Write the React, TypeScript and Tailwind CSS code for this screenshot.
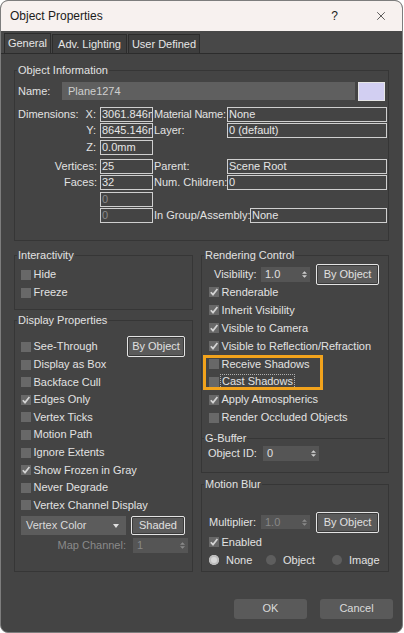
import { X } from "lucide-react";
import clsx from "clsx";

// Dark 3ds Max style "Object Properties" dialog

function Check({ checked }: { checked?: boolean }) {
  return (
    <span className="flex h-[10px] w-[10px] shrink-0 items-center justify-center bg-[#686868]">
      {checked && (
        <svg viewBox="0 0 10 10" className="h-[10px] w-[10px]">
          <path d="M1.8 5.2 L4 7.6 L8.4 2" stroke="#d4d4d4" strokeWidth="1.7" fill="none" />
        </svg>
      )}
    </span>
  );
}

function CheckRow({
  label,
  checked,
  className,
}: {
  label: string;
  checked?: boolean;
  className?: string;
}) {
  return (
    <div className={clsx("flex items-center whitespace-nowrap", className)}>
      <Check checked={checked} />
      <span className="ml-[2.5px]">{label}</span>
    </div>
  );
}

function Field({ value, dim, className }: { value: string; dim?: boolean; className?: string }) {
  return (
    <div
      className={clsx(
        "h-[15px] shrink-0 overflow-hidden whitespace-nowrap border border-[#cfcfcf] pl-[1px] leading-[13px]",
        dim ? "text-[#8a8a8a]" : "text-[#e6e6e6]",
        className
      )}
    >
      {value}
    </div>
  );
}

function Spinner({ value, disabled, className }: { value: string; disabled?: boolean; className?: string }) {
  return (
    <div
      className={clsx(
        "flex shrink-0 items-center justify-between bg-[#555555] pl-[4px] pr-[3px]",
        disabled ? "text-[#888888]" : "text-[#e0e0e0]",
        className
      )}
    >
      <span>{value}</span>
      <svg viewBox="0 0 6 10" className="h-[9px] w-[5px]">
        <path d="M0 4 L3 1 L6 4Z M0 6 L3 9 L6 6Z" fill={disabled ? "#8a8a8a" : "#cfcfcf"} />
      </svg>
    </div>
  );
}

function Button({ label, className }: { label: string; className?: string }) {
  return (
    <div
      className={clsx(
        "flex shrink-0 items-center justify-center rounded-[2px] border border-[#e4e4e4] bg-[#5a5a5a] text-[#e0e0e0] shadow-[inset_0_0_0_1px_#3a3a3a]",
        className
      )}
    >
      {label}
    </div>
  );
}

function Radio({ label, selected, className }: { label: string; selected?: boolean; className?: string }) {
  return (
    <div className={clsx("flex items-center", className)}>
      <span
        className={clsx(
          "h-[10px] w-[10px] shrink-0 rounded-full",
          selected ? "bg-[#d8d8d8] shadow-[inset_0_0_0_2px_#bdbdbd]" : "bg-[#5e5e5e]"
        )}
      />
      <span className="ml-[7px]">{label}</span>
    </div>
  );
}

function Tab({ label, active, className }: { label: string; active?: boolean; className?: string }) {
  return (
    <div
      className={clsx(
        "flex items-center justify-center border border-b-0 border-[#2c2c2c] text-[#e6e6e6]",
        active ? "h-[20px] bg-[#444444]" : "h-[19px] bg-[#3e3e3e]",
        className
      )}
    >
      {label}
    </div>
  );
}

export default function App() {
  return (
    <div className="h-[633px] w-[404px] bg-white font-['Liberation_Sans',Arial,sans-serif] text-[11px] leading-[13px] text-[#e2e2e2]">
      <div className="flex h-[633px] w-[403px] flex-col overflow-hidden rounded-[8px] border border-[#7d7d7d] bg-[#444444]">
        {/* Title bar */}
        <div className="flex h-[30px] shrink-0 items-center bg-[#f7f1ef] pl-[9px] text-[12px] text-[#1b1b1b]">
          <span className="flex-1">Object Properties</span>
          <span className="mr-[36px]">?</span>
          <X className="mr-[14px] h-[14px] w-[14px]" strokeWidth={1.2} />
        </div>

        {/* Tabs */}
        <div className="flex h-[23px] shrink-0 items-end gap-[1px] border-b border-[#2c2c2c] bg-[#484848] pl-[3px]">
          <Tab label="General" active className="w-[47px]" />
          <Tab label="Adv. Lighting" className="w-[75px]" />
          <Tab label="User Defined" className="w-[72px]" />
        </div>

        <div className="px-[13px]">
          {/* Object Information */}
          <fieldset className="mt-[9.5px] w-[375px] border border-[#363636] pb-[17px]">
            <legend className="ml-[2px] px-[1px]">Object Information</legend>

            <div className="mt-[5.5px] flex h-[18px] items-center pl-[3px]">
              <span className="w-[44px]">Name:</span>
              <div className="flex h-[18px] w-[293px] items-center bg-[#5f5f5f] pl-[6px] text-[#cfcfcf]">Plane1274</div>
              <div className="ml-[3px] h-[19px] w-[27px] border border-[#e6e6e6] bg-[#d2cff2]" />
            </div>

            <div className="mt-[7px] flex h-[15px] items-center whitespace-nowrap pl-[3px]">
              <div className="flex w-[82px] justify-between pr-[4px]">
                <span>Dimensions:</span>
                <span>X:</span>
              </div>
              <Field value="3061.846m" className="w-[53px]" />
              <span className="w-[74px] overflow-hidden pl-[1px] tracking-[-0.2px]">Material Name:</span>
              <Field value="None" className="w-[160px]" />
            </div>

            <div className="mt-[1px] flex h-[15px] items-center whitespace-nowrap pl-[3px]">
              <span className="w-[82px] pr-[4px] text-right">Y:</span>
              <Field value="8645.146m" className="w-[53px]" />
              <span className="w-[74px] pl-[1px]">Layer:</span>
              <Field value="0 (default)" className="w-[160px]" />
            </div>

            <div className="mt-[2px] flex h-[15px] items-center whitespace-nowrap pl-[3px]">
              <span className="w-[82px] pr-[4px] text-right">Z:</span>
              <Field value="0.0mm" className="w-[53px]" />
            </div>

            <div className="mt-[4px] flex h-[15px] items-center whitespace-nowrap pl-[3px]">
              <span className="w-[82px] pr-[3px] text-right">Vertices:</span>
              <Field value="25" className="w-[53px]" />
              <span className="w-[74px] pl-[1px]">Parent:</span>
              <Field value="Scene Root" className="w-[160px]" />
            </div>

            <div className="mt-[1px] flex h-[15px] items-center whitespace-nowrap pl-[3px]">
              <span className="w-[82px] pr-[3px] text-right">Faces:</span>
              <Field value="32" className="w-[53px]" />
              <span className="w-[74px] pl-[1px]">Num. Children:</span>
              <Field value="0" className="w-[160px]" />
            </div>

            <div className="mt-[2px] flex h-[15px] items-center whitespace-nowrap pl-[85px]">
              <Field value="0" dim className="w-[53px]" />
            </div>

            <div className="mt-[1px] flex h-[15px] items-center whitespace-nowrap pl-[85px]">
              <Field value="0" dim className="w-[53px]" />
              <span className="w-[97px] pl-[1px]">In Group/Assembly:</span>
              <Field value="None" className="w-[137px]" />
            </div>
          </fieldset>

          <div className="mt-[7.5px] flex gap-[8px]">
            {/* Left column */}
            <div className="w-[179px]">
              <fieldset className="w-[179px] border border-[#363636] pb-[7px]">
                <legend className="ml-[2px] px-[1px]">Interactivity</legend>
                <div className="mt-[4px] pl-[6px]">
                  <CheckRow label="Hide" className="h-[18px]" />
                  <CheckRow label="Freeze" className="h-[18px]" />
                </div>
              </fieldset>

              <fieldset className="mt-[4px] w-[179px] border border-[#363636] pb-[17.5px]">
                <legend className="ml-[2px] px-[1px]">Display Properties</legend>
                <div className="mt-[11.7px]">
                  <div className="flex h-[17.6px] items-center pl-[6px] pr-[7px]">
                    <CheckRow label="See-Through" />
                    <Button label="By Object" className="ml-auto h-[21px] w-[58px]" />
                  </div>
                  <CheckRow label="Display as Box" className="h-[17.6px] pl-[6px]" />
                  <CheckRow label="Backface Cull" className="h-[17.6px] pl-[6px]" />
                  <CheckRow label="Edges Only" checked className="h-[17.6px] pl-[6px]" />
                  <CheckRow label="Vertex Ticks" className="h-[17.6px] pl-[6px]" />
                  <CheckRow label="Motion Path" className="h-[17.6px] pl-[6px]" />
                  <CheckRow label="Ignore Extents" className="h-[17.6px] pl-[6px]" />
                  <CheckRow label="Show Frozen in Gray" checked className="h-[17.6px] pl-[6px]" />
                  <CheckRow label="Never Degrade" className="h-[17.6px] pl-[6px]" />
                  <CheckRow label="Vertex Channel Display" className="h-[17.6px] pl-[6px]" />
                </div>

                <div className="mt-[2px] flex h-[19px] items-center pl-[6px]">
                  <div className="flex h-[19px] w-[105px] items-center justify-between bg-[#5c5c5c] pl-[5px] pr-[7px] text-[#dadada]">
                    <span>Vertex Color</span>
                    <svg viewBox="0 0 6 4" className="h-[4px] w-[6px]">
                      <path d="M0 0 L6 0 L3 4Z" fill="#e0e0e0" />
                    </svg>
                  </div>
                  <Button label="Shaded" className="ml-[5px] h-[19px] w-[54px]" />
                </div>

                <div className="mt-[3px] flex h-[15px] items-center">
                  <span className="w-[111px] text-right text-[#8a8a8a]">Map Channel:</span>
                  <Spinner value="1" disabled className="ml-[7px] h-[15px] w-[55px]" />
                </div>
              </fieldset>
            </div>

            {/* Right column */}
            <div className="w-[188px]">
              <fieldset className="w-[188px] border border-[#363636] pb-[11px]">
                <legend className="ml-[2px] px-[1px]">Rendering Control</legend>

                <div className="mt-[4px] flex h-[18px] items-center pl-[12px]">
                  <span className="w-[47px]">Visibility:</span>
                  <Spinner value="1.0" className="h-[15px] w-[49px]" />
                  <Button label="By Object" className="ml-[6px] h-[21px] w-[63px]" />
                </div>

                <CheckRow label="Renderable" checked className="h-[17.9px] pl-[7px]" />
                <CheckRow label="Inherit Visibility" checked className="h-[17.9px] pl-[7px]" />
                <CheckRow label="Visible to Camera" checked className="h-[17.9px] pl-[7px]" />
                <CheckRow label="Visible to Reflection/Refraction" checked className="h-[17.9px] pl-[7px]" />

                <div className="relative">
                  <CheckRow label="Receive Shadows" className="h-[17.9px] pl-[7px]" />
                  <div className="flex h-[17.9px] items-center pl-[7px]">
                    <Check />
                    <span className="ml-[2px] px-[1px] outline outline-1 outline-dotted outline-[#b0b0b0]">Cast Shadows</span>
                  </div>
                  <div className="pointer-events-none absolute left-[0.7px] top-0 h-[35px] w-[120px] border-[3px] border-[#f2a31c]" />
                </div>

                <CheckRow label="Apply Atmospherics" checked className="h-[17.9px] pl-[7px]" />
                <CheckRow label="Render Occluded Objects" className="h-[17.9px] pl-[7px]" />

                <fieldset className="mt-[5px] w-[183px] border-0 border-t border-[#363636]">
                  <legend className="ml-[2px] px-[1px]">G-Buffer</legend>
                  <div className="mt-[0.5px] flex h-[16px] items-center pl-[6px]">
                    <span className="w-[55px]">Object ID:</span>
                    <Spinner value="0" className="h-[15px] w-[56px]" />
                  </div>
                </fieldset>
              </fieldset>

              <fieldset className="mt-[4.5px] w-[188px] border border-[#363636] pb-[1.2px]">
                <legend className="ml-[2px] px-[1px]">Motion Blur</legend>
                <div className="mt-[22.7px] flex h-[18px] items-center pl-[7px]">
                  <span className="w-[52px]">Multiplier:</span>
                  <Spinner value="1.0" disabled className="h-[14px] w-[49px]" />
                  <Button label="By Object" className="ml-[6px] h-[21px] w-[63px]" />
                </div>
                <CheckRow label="Enabled" checked className="mt-[2px] h-[18px] pl-[7px]" />
                <div className="flex h-[18px] items-center pl-[7px]">
                  <Radio label="None" selected className="w-[57px]" />
                  <Radio label="Object" className="w-[66px]" />
                  <Radio label="Image" />
                </div>
              </fieldset>
            </div>
          </div>
        </div>

        {/* Footer buttons */}
        <div className="mt-[27.3px] flex justify-end gap-[13px] pr-[9px]">
          <div className="flex h-[20px] w-[73px] items-center justify-center rounded-[3px] bg-[#5a5a5a] text-[#dadada]">OK</div>
          <div className="flex h-[20px] w-[73px] items-center justify-center rounded-[3px] bg-[#5a5a5a] text-[#dadada]">Cancel</div>
        </div>
      </div>
    </div>
  );
}
